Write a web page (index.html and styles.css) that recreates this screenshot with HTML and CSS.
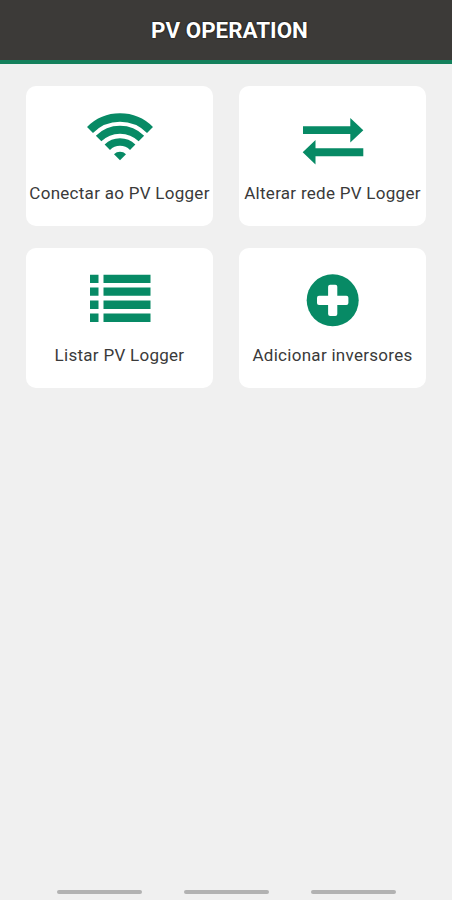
FILE: index.html
```html
<!DOCTYPE html>
<html lang="pt-BR">
<head>
    <meta charset="UTF-8">
    <title>PV Operation</title>
    <link rel="stylesheet" href="styles.css">
</head>
<body>
    <header class="header">
        <h1>PV OPERATION</h1>
    </header>
    <main class="menu">
        <a class="card">
            <svg class="icon" viewBox="0 0 100 70">
                <g class="arcs">
                    <path stroke-width="8.4" d="M20 30A42.4 42.4 0 0 1 80 30"/>
                    <path stroke-width="7.8" d="M28.6 38.6A30.3 30.3 0 0 1 71.4 38.6"/>
                    <path stroke-width="7.6" d="M37.3 47.3A18 18 0 0 1 62.7 47.3"/>
                </g>
                <path d="M50 60.3L44 54.3A8.5 8.5 0 0 1 56 54.3Z"/>
            </svg>
            <span class="label">Conectar ao PV Logger</span>
        </a>
        <a class="card">
            <svg class="icon" viewBox="0 0 100 70">
                <path d="M20 26.2H67.3V18L80.3 30.2L67.3 42.4V34H20Z"/>
                <path d="M80.3 48.2H32.5V40L19.7 52.2L32.5 64.4V56.3H80.3Z"/>
            </svg>
            <span class="label">Alterar rede PV Logger</span>
        </a>
        <a class="card">
            <svg class="icon" viewBox="0 0 100 70">
                <path d="M20 12.7h8.5v8.3h-8.5zM33.5 12.7h47v8.3h-47z"/>
                <path d="M20 25.4h8.5v8.3h-8.5zM33.5 25.4h47v8.3h-47z"/>
                <path d="M20 38.6h8.5v8.3h-8.5zM33.5 38.6h47v8.3h-47z"/>
                <path d="M20 51.6h8.5v8.3h-8.5zM33.5 51.6h47v8.3h-47z"/>
            </svg>
            <span class="label">Listar PV Logger</span>
        </a>
        <a class="card">
            <svg class="icon" viewBox="0 0 100 70">
                <circle cx="49.7" cy="38.3" r="26"/>
                <rect class="plus" x="34" y="33.8" width="31.4" height="9.2" rx="2"/>
                <rect class="plus" x="45.1" y="22.8" width="9.2" height="31.2" rx="2"/>
            </svg>
            <span class="label">Adicionar inversores</span>
        </a>
    </main>
    <footer class="navbar">
        <span></span>
        <span></span>
        <span></span>
    </footer>
</body>
</html>
```

FILE: styles.css
```css
* {
    box-sizing: border-box;
}
body {
    margin: 0;
    height: 100vh;
    display: flex;
    flex-direction: column;
    background-color: #f0f0f0;
    font-family: Roboto, sans-serif;
}
.header {
    height: 64px;
    background-color: #3c3a38;
    border-bottom: 4px solid #14805c;
    display: flex;
    align-items: center;
    justify-content: center;
}
.header h1 {
    margin: 0 0 0 7px;
    color: #fff;
    font-size: 22.4px;
    font-weight: 700;
    line-height: 26px;
    text-shadow: 0 0 2px #000;
}
.menu {
    flex: 1;
    display: grid;
    grid-template-columns: 187px 187px;
    grid-auto-rows: 139.5px;
    gap: 22.5px 26px;
    align-content: start;
    justify-content: center;
    padding-top: 22px;
}
.card {
    background-color: #fff;
    border-radius: 10px;
    display: flex;
    flex-direction: column;
    align-items: center;
    padding-top: 14px;
}
.icon {
    width: 100px;
    height: 70px;
    fill: #078a65;
}
.arcs {
    fill: none;
    stroke: #078a65;
}
.plus {
    fill: #fff;
}
.label {
    margin-top: 13px;
    color: #3a3a3a;
    font-size: 17px;
    line-height: 20px;
    white-space: nowrap;
    letter-spacing: 0.28px;
}
.navbar {
    display: flex;
    justify-content: center;
    gap: 42px;
    padding-bottom: 6px;
}
.navbar span {
    width: 85px;
    height: 4px;
    border-radius: 2px;
    background-color: #b2b2b2;
}
```
